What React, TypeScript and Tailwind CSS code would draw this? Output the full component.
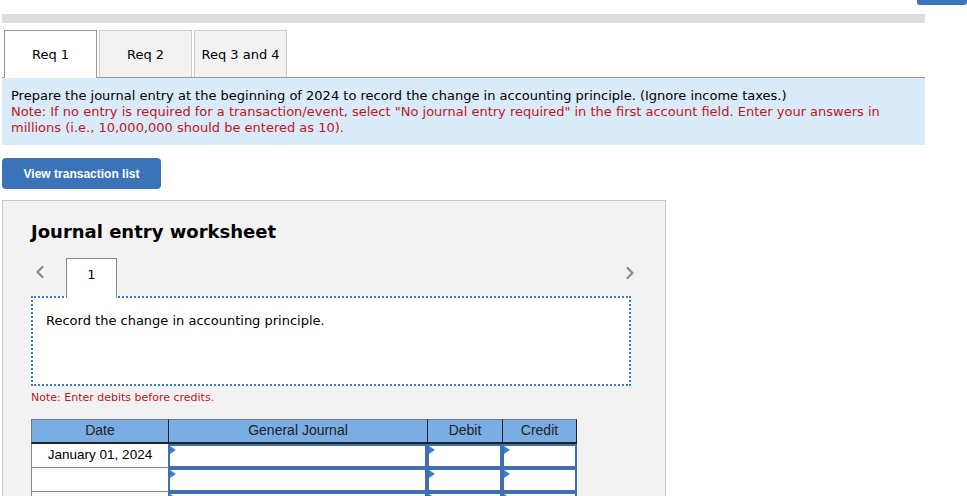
import { ChevronLeft, ChevronRight } from 'lucide-react'

const verdana = "font-['DejaVu_Sans','Verdana',sans-serif]"
const arial = "font-['Liberation_Sans','Arial',sans-serif]"

const tabs = ['Req 1', 'Req 2', 'Req 3 and 4']

function InputCell({ className = '' }: { className?: string }) {
  return (
    <div className={`relative border-2 border-[#3f70ad] bg-white ${className}`}>
      <span className="absolute left-0 top-0 h-0 w-0 border-y-[4px] border-l-[6px] border-y-transparent border-l-[#3d7dd6]" />
    </div>
  )
}

export default function App() {
  return (
    <div className={`relative h-[496px] w-[967px] overflow-hidden bg-white text-black ${verdana}`}>
      <div className="absolute right-0 top-0 h-[5px] w-[50px] rounded-b-[3px] bg-[#3a75bb]" />

      <div className="ml-[2px] mt-[14px] h-[9px] w-[923px] bg-[#dedede]" />

      {/* Req tabs */}
      <div className="ml-[2px] mt-[7px] flex w-[923px] gap-[2px] border-b border-[#999] pl-[2px]">
        {tabs.map((t, i) => (
          <div
            key={t}
            className={
              i === 0
                ? '-mb-px flex h-[48px] w-[93px] items-center justify-center border border-b-0 border-[#999] bg-white pt-[1px] text-[13px]'
                : 'flex h-[47px] w-[93px] items-center justify-center border border-b-0 border-[#ccc] bg-[#f2f2f2] pt-[1px] text-[13px]'
            }
          >
            {t}
          </div>
        ))}
      </div>

      {/* Instructions */}
      <div className="ml-[2px] w-[923px] bg-[#d9eaf8] px-[9px] pb-[9px] pt-[10px] text-[13px] leading-[16px]">
        <p>Prepare the journal entry at the beginning of 2024 to record the change in accounting principle. (Ignore income taxes.)</p>
        <p className="text-[#c3141e]">
          Note: If no entry is required for a transaction/event, select "No journal entry required" in the first account field. Enter your answers in millions (i.e., 10,000,000 should be entered as 10).
        </p>
      </div>

      <button
        type="button"
        className={`ml-[2px] mt-[13px] flex h-[31px] w-[159px] items-center justify-center rounded-[4px] bg-[#3b73b9] text-[12px] font-bold text-white ${arial}`}
      >
        View transaction list
      </button>

      {/* Worksheet */}
      <div className="ml-[2px] mt-[11px] h-[320px] w-[664px] border border-[#c8c8c8] bg-[#f2f2f2] pl-[28px]">
        <h2 className="mt-[19px] text-[18px] font-bold leading-[24px]">Journal entry worksheet</h2>

        <div className="relative mt-[14px] flex w-[600px] items-end">
          <ChevronLeft className="mb-[16px] -ml-[1px] h-[20px] w-[20px] text-[#8a8a8a]" strokeWidth={2.6} />
          <div className="relative z-10 ml-[16px] flex h-[40px] w-[51px] items-start justify-center border border-b-0 border-[#888] bg-white pt-[6px] text-[13px]">
            1
          </div>
          <ChevronRight className="absolute right-[-9px] top-[5px] h-[20px] w-[20px] text-[#8a8a8a]" strokeWidth={2.6} />
        </div>

        <div className="-mt-[2px] h-[90px] w-[600px] border-2 border-dotted border-[#3c78c3] bg-white px-[13px] pt-[13px] text-[13px]">
          Record the change in accounting principle.
        </div>

        <p className="mt-[4px] text-[11px] text-[#c3141e]">Note: Enter debits before credits.</p>

        {/* Table */}
        <div className={`mt-[12px] grid w-[546px] grid-cols-[137px_259px_75px_75px] text-[14px] ${arial}`}>
          <div className="flex h-[25px] items-center justify-center border-l border-t border-[#777] border-b-2 border-b-[#222] bg-[#7aade3] text-[#222]">Date</div>
          <div className="flex h-[25px] items-center justify-center border-l border-t border-l-[#222] border-t-[#777] border-b-2 border-b-[#222] bg-[#7aade3] text-[#222]">General Journal</div>
          <div className="flex h-[25px] items-center justify-center border-l border-t border-l-[#222] border-t-[#777] border-b-2 border-b-[#222] bg-[#7aade3] text-[#222]">Debit</div>
          <div className="flex h-[25px] items-center justify-center border-x border-t border-x-[#222] border-t-[#777] border-b-2 border-b-[#222] bg-[#7aade3] text-[#222]">Credit</div>

          <div className="flex h-[24px] items-center justify-center border-b border-l border-[#888] bg-white text-[13.5px]">January 01, 2024</div>
          <InputCell className="h-[24px]" />
          <InputCell className="h-[24px]" />
          <InputCell className="h-[24px]" />

          <div className="h-[24px] border-b border-l border-[#888] bg-white" />
          <InputCell className="h-[24px]" />
          <InputCell className="h-[24px]" />
          <InputCell className="h-[24px]" />

          <div className="h-[24px] border-b border-l border-[#888] bg-white" />
          <InputCell className="h-[24px]" />
          <InputCell className="h-[24px]" />
          <InputCell className="h-[24px]" />
        </div>
      </div>
    </div>
  )
}
